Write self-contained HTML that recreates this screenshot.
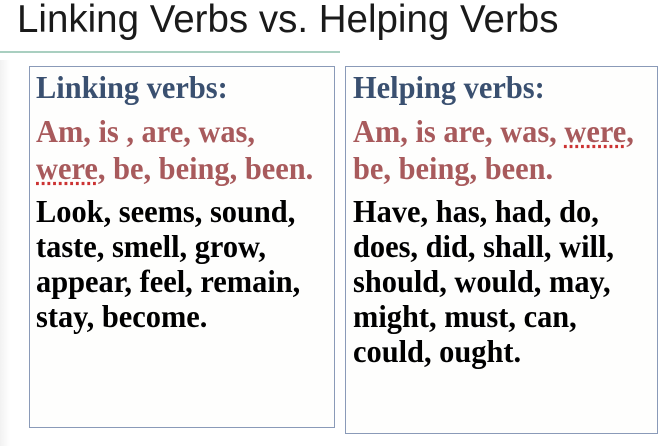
<!DOCTYPE html>
<html><head><style>
body{margin:0;width:670px;height:446px;background:#fff;position:relative;overflow:hidden;font-family:"Liberation Serif",serif}
.t{position:absolute;left:17px;top:-2px;font-family:"Liberation Sans",sans-serif;font-size:38.5px;font-weight:300;color:#1a1a1a;white-space:nowrap}
.hl{position:absolute;left:0;top:51px;width:340px;height:2px;background:#a9cfc0}
.lg{position:absolute;left:0;top:60px;width:10px;height:386px;background:linear-gradient(90deg,#f2f2f2,#fff)}
.box{position:absolute;border:1px solid #8a9ab8;background:#fefefd}
.l{position:absolute;font-weight:bold;font-size:32px;white-space:nowrap;transform-origin:0 0;transform:scaleX(.95);line-height:1}
.h{color:#3a5070}.r{color:#a85a5c}.k{color:#000}
.u{text-decoration:underline dotted #c33;text-underline-offset:3px}
</style></head><body>
<div class="t">Linking Verbs vs. Helping Verbs</div>
<div class="hl"></div><div class="lg"></div>
<div class="box" style="left:29px;top:66px;width:304px;height:360px"></div>
<div class="box" style="left:345px;top:66px;width:311px;height:366px"></div>
<div class="l h" style="left:36px;top:71px">Linking verbs:</div>
<div class="l r" style="left:36px;top:115px">Am, is , are, was,</div>
<div class="l r" style="left:36px;top:152px"><span class="u">were</span>, be, being, been.</div>
<div class="l k" style="left:36px;top:195px">Look, seems, sound,</div>
<div class="l k" style="left:36px;top:230px">taste, smell, grow,</div>
<div class="l k" style="left:36px;top:265px">appear, feel, remain,</div>
<div class="l k" style="left:36px;top:300px">stay, become.</div>
<div class="l h" style="left:353px;top:71px">Helping verbs:</div>
<div class="l r" style="left:353px;top:115px">Am, is are, was, <span class="u">were</span>,</div>
<div class="l r" style="left:353px;top:152px">be, being, been.</div>
<div class="l k" style="left:353px;top:195px">Have, has, had, do,</div>
<div class="l k" style="left:353px;top:230px">does, did, shall, will,</div>
<div class="l k" style="left:353px;top:265px">should, would, may,</div>
<div class="l k" style="left:353px;top:300px">might, must, can,</div>
<div class="l k" style="left:353px;top:335px">could, ought.</div>
</body></html>
